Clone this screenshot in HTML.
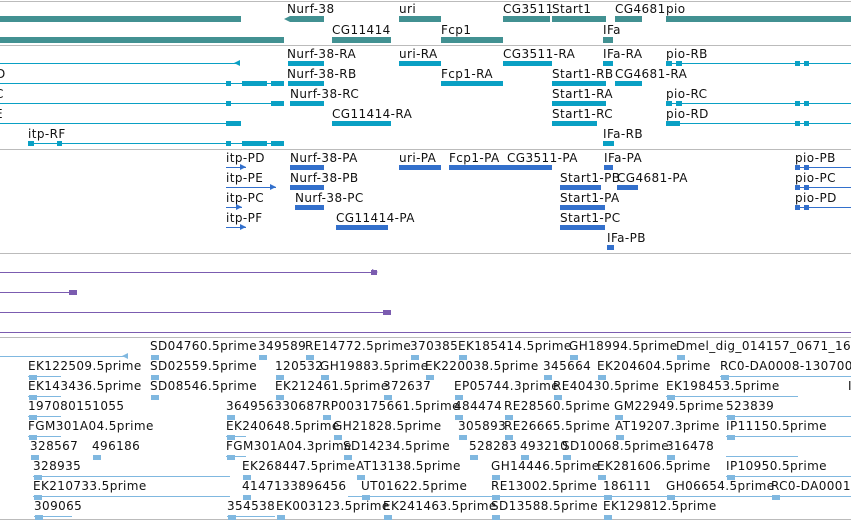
<!DOCTYPE html><html><head><style>
body{margin:0;width:851px;height:521px;overflow:hidden;background:#fff;position:relative;font-family:"DejaVu Sans","Liberation Sans",sans-serif;}
.t{position:absolute;font-size:12px;letter-spacing:0.4px;line-height:14px;color:#111;white-space:nowrap}
.b{position:absolute}
</style></head><body>
<script>
function T(x,y,s){document.write('<div class="t" style="left:'+x+'px;top:'+y+'px">'+s+'</div>');}
function B(x1,x2,y,h,c){document.write('<div class="b" style="left:'+x1+'px;width:'+(x2-x1)+'px;top:'+y+'px;height:'+h+'px;background:'+c+'"></div>');}
function L(x1,x2,y,c){B(x1,x2,y,1,c);}
function F(x1,x2,y,c){B(x1,x2,y-2,5,c);}
function Ar(x,y,c,dir){document.write('<div class="b" style="left:'+(dir>0?x:x-6)+'px;top:'+(y-3)+'px;width:0;height:0;border-top:3px solid transparent;border-bottom:3px solid transparent;'+(dir>0?'border-left':'border-right')+':6px solid '+c+'"></div>');}
var G='#bbb';
[1,45,149,253,337,519].forEach(function(y){L(0,851,y,G);});
// gene track
var g='#429192';
B(0,241,16,6,g);T(287,2,'Nurf-38');B(290,324,16,6,g);Ar(290,19,g,-1);
T(399,2,'uri');B(399,441,16,6,g);T(503,2,'CG3511');B(503,550,16,6,g);T(552,2,'Start1');B(552,606,16,6,g);
T(615,2,'CG4681');B(615,642,16,6,g);T(666,2,'pio');B(666,851,16,6,g);
B(0,284,37,6,g);T(332,23,'CG11414');B(332,391,37,6,g);T(441,23,'Fcp1');B(441,503,37,6,g);T(603,23,'IFa');B(603,613,37,6,g);
// transcript
var c='#0aa0c4';
function r(i){return 63+20*i;} function ly(i){return 47+20*i;}
L(0,240,r(0),c);Ar(240,r(0),c,-1);
T(287,ly(0),'Nurf-38-RA');F(288,324,r(0),c);T(399,ly(0),'uri-RA');F(399,441,r(0),c);
T(503,ly(0),'CG3511-RA');F(503,552,r(0),c);T(603,ly(0),'IFa-RA');F(603,613,r(0),c);
T(666,ly(0),'pio-RB');L(666,851,r(0),c);F(666,672,r(0),c);F(676,682,r(0),c);F(795,800,r(0),c);F(804,809,r(0),c);
L(0,284,r(1),c);F(226,231,r(1),c);F(242,267,r(1),c);F(271,284,r(1),c);T(287,ly(1),'Nurf-38-RB');F(288,324,r(1),c);
T(441,ly(1),'Fcp1-RA');F(441,503,r(1),c);T(552,ly(1),'Start1-RB');F(552,606,r(1),c);T(615,ly(1),'CG4681-RA');F(615,642,r(1),c);
L(0,284,r(2),c);F(226,231,r(2),c);F(271,284,r(2),c);T(290,ly(2),'Nurf-38-RC');F(290,324,r(2),c);T(552,ly(2),'Start1-RA');F(552,606,r(2),c);
T(666,ly(2),'pio-RC');L(666,851,r(2),c);F(666,672,r(2),c);F(676,682,r(2),c);F(795,800,r(2),c);F(804,809,r(2),c);
L(0,241,r(3),c);F(226,241,r(3),c);T(332,ly(3),'CG11414-RA');F(332,391,r(3),c);T(552,ly(3),'Start1-RC');F(552,597,r(3),c);
T(666,ly(3),'pio-RD');L(666,851,r(3),c);F(666,680,r(3),c);F(795,800,r(3),c);F(804,809,r(3),c);
T(28,ly(4),'itp-RF');L(28,284,r(4),c);F(28,34,r(4),c);F(57,62,r(4),c);F(226,231,r(4),c);F(242,267,r(4),c);F(271,284,r(4),c);
T(603,ly(4),'IFa-RB');F(603,614,r(4),c);
T(-4,ly(1),'D');T(-5,ly(2),'C');T(-5,ly(3),'E');
// protein
var p='#3370cc';function q(i){return 167+20*i;}function qy(i){return 151+20*i;}
T(226,qy(0),'itp-PD');L(226,246,q(0),p);Ar(240,q(0),p,1);T(290,qy(0),'Nurf-38-PA');F(290,324,q(0),p);
T(399,qy(0),'uri-PA');F(399,441,q(0),p);T(449,qy(0),'Fcp1-PA');F(449,510,q(0),p);T(507,qy(0),'CG3511-PA');F(507,552,q(0),p);
T(604,qy(0),'IFa-PA');F(604,613,q(0),p);T(795,qy(0),'pio-PB');L(795,851,q(0),p);F(795,800,q(0),p);F(804,809,q(0),p);
T(226,qy(1),'itp-PE');L(226,276,q(1),p);Ar(270,q(1),p,1);T(290,qy(1),'Nurf-38-PB');F(290,324,q(1),p);
T(560,qy(1),'Start1-PB');F(560,601,q(1),p);T(617,qy(1),'CG4681-PA');F(617,638,q(1),p);T(795,qy(1),'pio-PC');L(795,851,q(1),p);F(795,800,q(1),p);F(804,809,q(1),p);
T(226,qy(2),'itp-PC');L(226,242,q(2),p);Ar(236,q(2),p,1);T(295,qy(2),'Nurf-38-PC');F(295,324,q(2),p);
T(560,qy(2),'Start1-PA');F(560,605,q(2),p);T(795,qy(2),'pio-PD');L(795,851,q(2),p);F(795,800,q(2),p);F(804,809,q(2),p);
T(226,qy(3),'itp-PF');L(226,246,q(3),p);Ar(240,q(3),p,1);T(336,qy(3),'CG11414-PA');F(336,388,q(3),p);T(560,qy(3),'Start1-PC');F(560,605,q(3),p);
T(607,qy(4),'IFa-PB');F(607,614,q(4),p);
// purple
var v='#7b5cb0';
L(0,372,272,v);Ar(372,272,v,1);B(371,377,270,5,v);L(0,70,292,v);B(69,77,290,5,v);L(0,386,312,v);B(383,391,310,5,v);L(0,851,332,v);
// bottom track
var e='#80b8e0';function s(i){return 356+20*i;}function sy(i){return 339+20*i;}
var rows=[
[[150,'SD04760.5prime'],[258,'349589'],[305,'RE14772.5prime'],[410,'370385'],[458,'EK185414.5prime'],[569,'GH18994.5prime'],[676,'Dmel_dig_014157_0671_168']],
[[28,'EK122509.5prime'],[150,'SD02559.5prime'],[275,'120532'],[320,'GH19883.5prime'],[425,'EK220038.5prime'],[543,'345664'],[597,'EK204604.5prime'],[720,'RC0-DA0008-130700']],
[[28,'EK143436.5prime'],[150,'SD08546.5prime'],[275,'EK212461.5prime'],[383,'372637'],[454,'EP05744.3prime'],[553,'RE40430.5prime'],[666,'EK198453.5prime'],[848,'I']],
[[28,'197080151055'],[226,'364956330687'],[322,'RP003175661.5prime'],[454,'484474'],[504,'RE28560.5prime'],[614,'GM22949.5prime'],[726,'523839']],
[[28,'FGM301A04.5prime'],[226,'EK240648.5prime'],[333,'GH21828.5prime'],[458,'305893'],[504,'RE26665.5prime'],[615,'AT19207.3prime'],[726,'IP11150.5prime']],
[[30,'328567'],[92,'496186'],[226,'FGM301A04.3prime'],[343,'SD14234.5prime'],[469,'528283'],[520,'493210'],[562,'SD10068.5prime'],[666,'316478']],
[[33,'328935'],[242,'EK268447.5prime'],[356,'AT13138.5prime'],[491,'GH14446.5prime'],[597,'EK281606.5prime'],[726,'IP10950.5prime']],
[[33,'EK210733.5prime'],[242,'4147133896456'],[361,'UT01622.5prime'],[491,'RE13002.5prime'],[603,'186111'],[666,'GH06654.5prime'],[771,'RC0-DA0001']],
[[34,'309065'],[227,'354538'],[276,'EK003123.5prime'],[383,'EK241463.5prime'],[491,'SD13588.5prime'],[603,'EK129812.5prime']]];
rows.forEach(function(row,i){row.forEach(function(a){T(a[0],sy(i),a[1]);if(a[0]<845)F(a[0]+1,a[0]+9,s(i)+1,e);});});
L(0,128,356,e);Ar(128,356,e,-1);L(28,61,376,e);L(28,61,396,e);L(28,61,416,e);L(28,61,436,e);
L(720,851,376,e);L(666,798,396,e);L(726,851,416,e);L(726,851,436,e);L(726,798,456,e);L(726,851,476,e);L(348,851,496,e);
L(33,230,476,e);L(33,230,496,e);L(34,72,516,e);L(227,275,516,e);L(226,246,436,e);L(226,246,456,e);
</script>
</body></html>
